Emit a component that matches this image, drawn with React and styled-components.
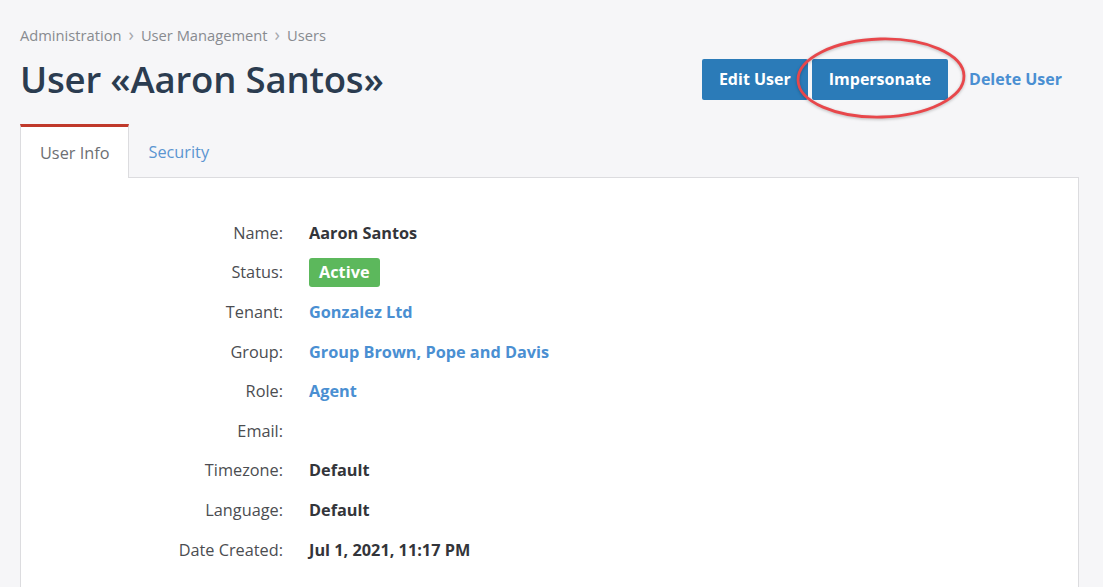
import React from 'react'
import styled, { createGlobalStyle } from 'styled-components'

const GlobalStyle = createGlobalStyle`
  html, body {
    margin: 0;
    padding: 0;
    background: #f6f6f8;
    font-family: "Open Sans", "Noto Sans", sans-serif;
  }
`

const details = [
  { label: 'Name', value: 'Aaron Santos', kind: 'text' },
  { label: 'Status', value: 'Active', kind: 'badge' },
  { label: 'Tenant', value: 'Gonzalez Ltd', kind: 'link' },
  { label: 'Group', value: 'Group Brown, Pope and Davis', kind: 'link' },
  { label: 'Role', value: 'Agent', kind: 'link' },
  { label: 'Email', value: '', kind: 'text' },
  { label: 'Timezone', value: 'Default', kind: 'text' },
  { label: 'Language', value: 'Default', kind: 'text' },
  { label: 'Date Created', value: 'Jul 1, 2021, 11:17 PM', kind: 'text' },
]

export default function App() {
  return (
    <Page>
      <GlobalStyle />
      <Breadcrumbs>
        <Crumb>Administration</Crumb>
        <Sep>›</Sep>
        <Crumb>User Management</Crumb>
        <Sep>›</Sep>
        <Crumb>Users</Crumb>
      </Breadcrumbs>

      <Header>
        <Title>User «Aaron Santos»</Title>
        <Actions>
          <Button>Edit User</Button>
          <Marked>
            <Button>Impersonate</Button>
            <Circle viewBox="0 0 172 84">
              <ellipse
                cx="86"
                cy="42"
                rx="83"
                ry="39"
                transform="rotate(-1.5 86 42)"
                fill="none"
                stroke="#e8474b"
                strokeWidth="2.8"
              />
            </Circle>
          </Marked>
          <LinkButton>Delete User</LinkButton>
        </Actions>
      </Header>

      <Tabs>
        <Tab active>User Info</Tab>
        <Tab>Security</Tab>
        <TabFill />
      </Tabs>

      <Panel>
        <Grid>
          {details.map((d) => (
            <React.Fragment key={d.label}>
              <Label>{d.label}:</Label>
              <Value kind={d.kind}>
                {d.kind === 'badge' ? <Badge>{d.value}</Badge> : d.value}
              </Value>
            </React.Fragment>
          ))}
        </Grid>
      </Panel>
    </Page>
  )
}

const Page = styled.div`
  padding: 25px 24px 0 20px;
  height: 587px;
  box-sizing: border-box;
  overflow: hidden;
`

const Breadcrumbs = styled.div`
  display: flex;
  align-items: center;
  gap: 7px;
  font-size: 14.7px;
  line-height: 20px;
  color: #888b90;
`

const Crumb = styled.span``

const Sep = styled.span`
  color: #a6a9ad;
  font-size: 18px;
  line-height: 20px;
  margin-top: -2px;
`

const Header = styled.div`
  display: flex;
  align-items: center;
  justify-content: space-between;
  height: 54px;
  margin-top: 7px;
`

const Title = styled.h1`
  margin: 0;
  font-size: 36.6px;
  font-weight: 600;
  color: #2b3c50;
  letter-spacing: -0.2px;
`

const Actions = styled.div`
  display: flex;
  align-items: center;
  gap: 4px;
  margin-right: 17px;
  margin-top: 0;
`

const Marked = styled.div`
  position: relative;
  display: flex;
`

const Circle = styled.svg`
  position: absolute;
  left: -17px;
  top: -23px;
  width: 172px;
  height: 84px;
  overflow: visible;
  pointer-events: none;
  filter: drop-shadow(0 1px 1.5px rgba(0, 0, 0, 0.25));
`

const Button = styled.button`
  height: 41px;
  padding: 0 17px;
  border: none;
  border-radius: 2px;
  background: #2b7bb8;
  color: #fff;
  font-family: inherit;
  font-size: 16px;
  font-weight: 700;
`

const LinkButton = styled.button`
  height: 41px;
  padding: 0 0 0 17px;
  border: none;
  background: none;
  color: #4a8fd2;
  font-family: inherit;
  font-size: 16px;
  font-weight: 700;
`

const Tabs = styled.div`
  display: flex;
  margin-top: 18px;
`

const Tab = styled.div`
  height: 51px;
  padding: 0 19px;
  display: flex;
  align-items: center;
  font-size: 16.3px;
  box-sizing: border-box;
  ${(p) =>
    p.active
      ? `
    color: #6d6f73;
    background: #fff;
    border-top: 3px solid #c0392b;
    border-left: 1px solid #dcdcdf;
    border-right: 1px solid #dcdcdf;
    height: 54px;
    margin-bottom: -1px;
  `
      : `
    color: #5b95d1;
    margin-top: 3px;
    border-bottom: 1px solid #dcdcdf;
  `}
`

const TabFill = styled.div`
  flex: 1;
  border-bottom: 1px solid #dcdcdf;
`

const Panel = styled.div`
  background: #fff;
  border: 1px solid #dcdcdf;
  border-top: none;
  padding: 35px 0 30px;
  min-height: 420px;
`

const Grid = styled.div`
  display: grid;
  grid-template-columns: 262px 1fr;
  column-gap: 26px;
  grid-auto-rows: 39.6px;
  align-items: center;
`

const Label = styled.div`
  text-align: right;
  font-size: 16.3px;
  color: #4b4d51;
`

const Value = styled.div`
  font-size: 16.3px;
  font-weight: 700;
  color: ${(p) => (p.kind === 'link' ? '#4a8fd2' : '#33353a')};
`

const Badge = styled.span`
  display: inline-flex;
  align-items: center;
  height: 29px;
  padding: 0 10px;
  border-radius: 3px;
  background: #5cb85c;
  color: #fff;
  font-size: 16.3px;
  font-weight: 700;
`
